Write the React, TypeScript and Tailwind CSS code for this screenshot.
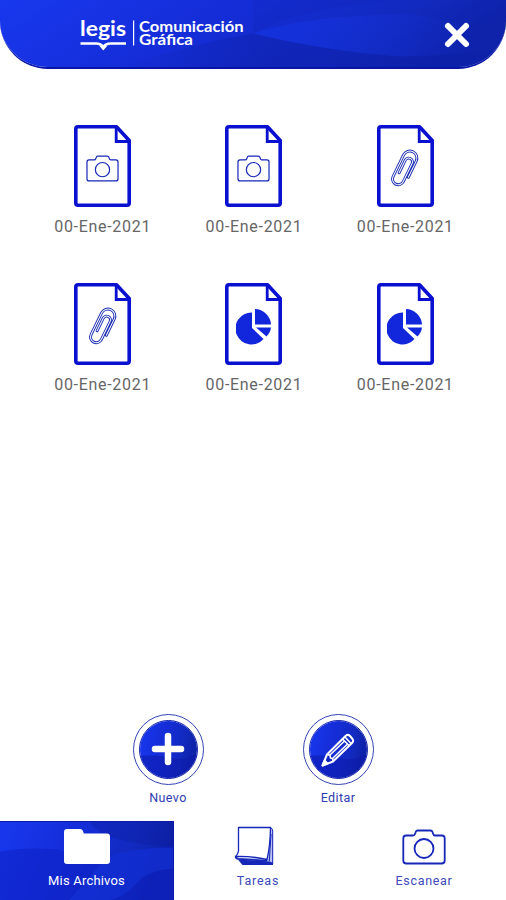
import type { ReactNode } from "react";

type FileKind = "photo" | "clip" | "chart";

const files: { id: number; kind: FileKind; date: string }[] = [
  { id: 1, kind: "photo", date: "00-Ene-2021" },
  { id: 2, kind: "photo", date: "00-Ene-2021" },
  { id: 3, kind: "clip", date: "00-Ene-2021" },
  { id: 4, kind: "clip", date: "00-Ene-2021" },
  { id: 5, kind: "chart", date: "00-Ene-2021" },
  { id: 6, kind: "chart", date: "00-Ene-2021" },
];

function Logo() {
  return (
    <svg width="166" height="34" viewBox="0 0 166 34" fill="white" className="block overflow-visible">
      <text x="0" y="18" fontSize="21.5" fontWeight="700" textLength="46" lengthAdjust="spacingAndGlyphs" className="font-['Lato',sans-serif]">
        legis
      </text>
      <path d="M0.500 25.500H16q5 0 7.300 3.500q2.300-3.500 7.300-3.500H46" fill="none" stroke="white" strokeWidth="2.400" />
      <path d="M19 27.500l4.300 5 4.300-5-4.300 1z" />
      <rect x="53" y="2.500" width="1.200" height="25" />
      <text x="59" y="13.600" fontSize="14.500" fontWeight="700" textLength="104.500" lengthAdjust="spacingAndGlyphs" className="font-['Lato',sans-serif]">
        Comunicación
      </text>
      <text x="59" y="27" fontSize="14.500" fontWeight="700" textLength="54" lengthAdjust="spacingAndGlyphs" className="font-['Lato',sans-serif]">
        Gráfica
      </text>
    </svg>
  );
}

function Camera({ className, strokeWidth }: { className: string; strokeWidth: number }) {
  return (
    <svg viewBox="0 0 44 36" fill="none" stroke="#1526b8" strokeWidth={strokeWidth} strokeLinejoin="round" className={className}>
      <path d="M4 6.500H11q1.500 0 2-1.500l.5-1.500Q14 1.500 15.500 1.500h13q1.500 0 2 1.500l.5 1.500Q31.500 6.500 33 6.500h7Q42.700 6.500 42.700 9.500v22q0 3-3 3H4.300q-3 0-3-3v-22q0-3 2.700-3z" />
      <circle cx="22" cy="19.500" r="9.500" />
    </svg>
  );
}

function Clip() {
  return (
    <svg width="30" height="42" viewBox="0 0 30 42" fill="none" strokeLinecap="round" className="block">
      <g transform="rotate(26 15 21)">
        <path d="M11.400 27V13a3.800 3.800 0 0 1 7.600 0v20a5.700 5.700 0 0 1-11.400 0V9a7 7 0 0 1 14 0v18" stroke="#1d2fb5" strokeWidth="2.900" />
        <path d="M11.400 27V13a3.800 3.800 0 0 1 7.600 0v20a5.700 5.700 0 0 1-11.400 0V9a7 7 0 0 1 14 0v18" stroke="white" strokeWidth="1" />
      </g>
    </svg>
  );
}

function Pie() {
  return (
    <svg width="36" height="38" viewBox="0 0 36 38" fill="#1226dc" className="block">
      <path d="M16 4.500V20L27.500 31A16 16 0 1 1 16 4.500z" />
      <path d="M19 1A16.500 16.500 0 0 1 35 16.500H19z" />
      <path d="M20 19.500h15q-.6 5-4.500 9z" />
    </svg>
  );
}

function FileIcon({ kind }: { kind: FileKind }) {
  return (
    <div className="grid h-[82px] w-[57px] place-items-center">
      <svg viewBox="0 0 57 82" fill="none" stroke="#0910d0" strokeWidth="3.600" strokeLinejoin="round" className="col-start-1 row-start-1 h-[82px] w-[57px]">
        <path d="M4 1.800H42.500L55.200 15.500V78q0 2.200-2.200 2.200H4Q1.800 80.200 1.800 78V4Q1.800 1.800 4 1.800z" />
        <path d="M42.200 2.500V16.500H54.500" strokeWidth="2.800" strokeLinejoin="miter" />
      </svg>
      <div className="col-start-1 row-start-1 pt-[5px]">
        {kind === "photo" && <Camera className="h-[27px] w-[33px]" strokeWidth={1.6} />}
        {kind === "clip" && <Clip />}
        {kind === "chart" && <Pie />}
      </div>
    </div>
  );
}

/* Blue swoosh used behind the header, the round buttons and the active tab */
function Waves({ id, children }: { id: string; children: ReactNode }) {
  return (
    <svg viewBox="0 0 100 100" preserveAspectRatio="none" className="col-start-1 row-start-1 h-full w-full">
      <defs>
        <linearGradient id={id} x1="0" y1="0" x2="1" y2="0.200">
          <stop offset="0" stopColor="#1838ee" />
          <stop offset="0.450" stopColor="#152dd8" />
          <stop offset="0.800" stopColor="#122abf" />
          <stop offset="1" stopColor="#0e22aa" />
        </linearGradient>
      </defs>
      <rect width="100" height="100" fill={`url(#${id})`} />
      {children}
    </svg>
  );
}

function RoundAction({ id, label, children }: { id: string; label: string; children: ReactNode }) {
  return (
    <button className="flex w-[170px] flex-col items-center">
      <span className="flex h-[71px] w-[71px] items-center justify-center rounded-full border border-[#3444b4]">
        <span className="grid h-[59px] w-[59px] place-items-center overflow-hidden rounded-full border border-[#0a18a8]">
          <Waves id={id}>
            <path d="M0 61Q35 59 55 65T100 58V100H0z" fill="#0b18a8" fillOpacity="0.500" />
          </Waves>
          <span className="col-start-1 row-start-1">{children}</span>
        </span>
      </span>
      <span className="mt-[5px] text-[12.500px] leading-4 tracking-[0.400px] text-[#2c3cb0]">{label}</span>
    </button>
  );
}

export default function App() {
  return (
    <div className="flex h-[900px] w-[506px] flex-col bg-white font-['Roboto',sans-serif]">
      <header className="grid h-[69px] overflow-hidden rounded-b-[48px] border-b-2 border-[#0a15a8]">
        <Waves id="header-bg">
          <defs>
            <linearGradient id="header-shade" x1="0" y1="0" x2="1" y2="0">
              <stop offset="0" stopColor="#0d1fa8" stopOpacity="0" />
              <stop offset="0.350" stopColor="#0d1fa8" stopOpacity="0.450" />
              <stop offset="1" stopColor="#0d1fa8" stopOpacity="0.500" />
            </linearGradient>
            <linearGradient id="header-glow" x1="0" y1="0" x2="1" y2="0">
              <stop offset="0" stopColor="#1636ea" stopOpacity="0.550" />
              <stop offset="1" stopColor="#1636ea" stopOpacity="0" />
            </linearGradient>
          </defs>
          <path d="M50 50Q58 15 77 0H50z" fill="#0d1fa8" fillOpacity="0.120" />
          <path d="M50 50Q62 20 82 22Q96 40 96 72Q88 85 78 84Q64 75 50 50z" fill="url(#header-glow)" />
          <path d="M24 100Q38 65 50 50Q64 76 78 84Q90 87 100 70V100z" fill="url(#header-shade)" />
        </Waves>
        <div className="col-start-1 row-start-1 flex items-start justify-between pt-[18px] pr-[35px] pl-20">
          <Logo />
          <button aria-label="Cerrar" className="pt-[3px]">
            <svg width="28" height="28" viewBox="0 0 28 28" stroke="white" strokeWidth="6" strokeLinecap="round" className="block">
              <path d="M5 5L23 23M23 5L5 23" />
            </svg>
          </button>
        </div>
      </header>

      <main className="grid grid-cols-3 gap-y-[52px] pt-14 pr-[25px] pl-[27px]">
        {files.map((file) => (
          <div key={file.id} className="flex h-[106px] flex-col items-center">
            <FileIcon kind={file.kind} />
            <span className="mt-[9px] text-[16px] leading-[22px] tracking-[0.700px] whitespace-nowrap text-[#666]">{file.date}</span>
          </div>
        ))}
      </main>

      <div className="mt-auto flex h-[107px] justify-center">
        <RoundAction id="new-bg" label="Nuevo">
          <svg width="36" height="36" viewBox="0 0 36 36" stroke="white" strokeWidth="6.500" strokeLinecap="round" className="block">
            <path d="M18 4v26M5 17h26" />
          </svg>
        </RoundAction>
        <RoundAction id="edit-bg" label="Editar">
          <svg width="36" height="36" viewBox="0 0 36 36" fill="none" stroke="white" strokeWidth="2" strokeLinejoin="round" className="block">
            <path d="M2.500 33.500L7 22.500 26 3.500q2-1.500 4 .5l2.500 3q1.500 2-.5 4L13 29.500z" />
            <path d="M7 22.500l3 .8.500 2.700 2.300.8.200 2.700M22.500 7l7 7M25 5l6.500 7M10 23L24.500 9M12.500 26.500L27 12.500" strokeWidth="1.600" />
            <path d="M2.500 33.500l2-5 3 3z" fill="white" />
          </svg>
        </RoundAction>
      </div>

      <nav className="flex h-[79px] text-[12.500px] leading-4 tracking-[0.500px] text-[#3c4abb]">
        <button className="grid w-[174px] border-t border-r border-[#0b18a8] text-white">
          <Waves id="tab-bg">
            <path d="M0 38Q14 32 32 35Q55 48 72 40Q85 32 100 32V100H0z" fill="#0d20c4" fillOpacity="0.550" />
            <path d="M52 0Q58 26 100 32V0z" fill="#0a1a98" fillOpacity="0.300" />
            <path d="M62 45Q78 32 100 33V60Q85 62 78 80Q72 95 64 100H40z" fill="#1737de" fillOpacity="0.450" />
          </Waves>
          <span className="col-start-1 row-start-1 flex flex-col items-center pt-[7px]">
            <svg width="46" height="35" viewBox="0 0 46 35" fill="white" className="block">
              <path d="M3 0h13q2.500 0 3.300 3l.5 1.500H43q3 0 3 3V32q0 3-3 3H3q-3 0-3-3V3q0-3 3-3z" />
            </svg>
            <span className="mt-[9px] text-[13px] tracking-[0.200px]">Mis Archivos</span>
          </span>
        </button>
        <button className="flex w-[168px] flex-col items-center pt-[5px]">
          <svg width="40" height="40" viewBox="0 0 40 40" fill="none" className="mr-[8px] block" stroke="#1526b8" strokeLinejoin="round">
            <path d="M2 31l6 8h31V4.500L36 2l-3 31z" fill="#b9c1f0" stroke="none" />
            <path d="M4 33.500l4.500 5.500H39v-2l-3-1.500z" fill="#1526b8" stroke="none" />
            <path d="M4.500 1.500H36.500Q36.200 20 33 33.500Q18 30 1.500 30.500Q4.200 28 4.500 25z" fill="white" strokeWidth="1.300" />
            <path d="M1.500 30.500q.3 2 2.500 2.300l28 2 1-1.300" strokeWidth="1.800" />
            <path d="M36.500 1.500Q38.700 2.500 38.700 5v33M37 8l-1.700 27" strokeWidth="1" />
          </svg>
          <span className="mt-[7px] tracking-[0.800px]">Tareas</span>
        </button>
        <button className="flex w-[164px] flex-col items-center pt-2">
          <Camera className="h-9 w-11" strokeWidth={1.8} />
          <span className="mt-2 tracking-[0.700px]">Escanear</span>
        </button>
      </nav>
    </div>
  );
}
